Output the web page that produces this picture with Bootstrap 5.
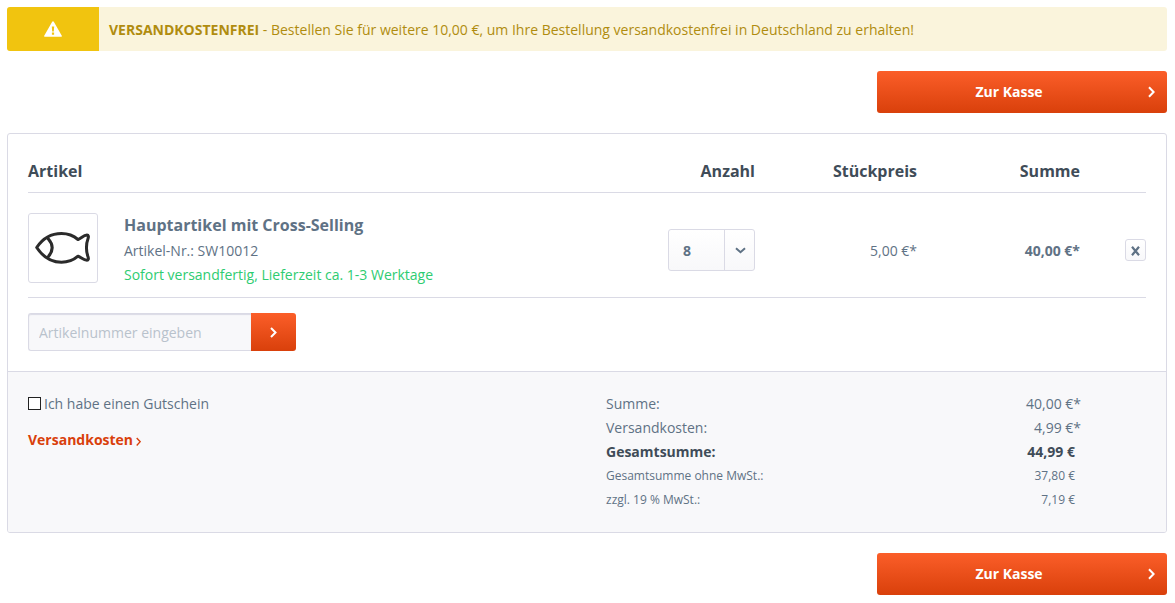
<!DOCTYPE html>
<html lang="de">
<head>
<meta charset="utf-8">
<meta name="viewport" content="width=device-width, initial-scale=1">
<title>Warenkorb</title>
<link href="https://cdn.jsdelivr.net/npm/bootstrap@5.3.0/dist/css/bootstrap.min.css" rel="stylesheet">
<script src="https://cdn.jsdelivr.net/npm/bootstrap@5.3.0/dist/js/bootstrap.bundle.min.js" defer></script>
<style>
  :root { --line: #dadae5; --ink: #5f7285; --head: #3f4c58; --soft: #f8f8fa; --fire: #d9400b; }
  body { font-family: "Open Sans", sans-serif; font-size: 14px; line-height: 24px; color: var(--ink); padding: 7px 8px 8px 7px; }
  svg { display: block; }
  .notice { background: #faf4dc; color: #b08c0f; border-radius: 3px; overflow: hidden; min-height: 44px; }
  .notice-icon { background: #f1c40f; color: #fff; width: 92px; }
  .notice-text { padding: 11px 10px 9px; }
  .btn-fire { background: linear-gradient(#fb5e29, #d9400b); color: #fff; border: 0; border-radius: 3px; font-size: 14px; font-weight: 700; line-height: 24px; }
  .btn-fire:hover { background: #fb5e29; color: #fff; }
  .btn-checkout { width: 290px; height: 42px; padding: 0 36px 0 10px; }
  .btn-checkout svg { right: 12px; top: 15px; }
  .checkout-top { margin-top: 20px; }
  .basket { border: 1px solid var(--line); border-radius: 3px; margin: 20px 0; overflow: hidden; }
  .basket-body { padding: 20px; }
  .basket-items { table-layout: fixed; }
  .basket-items th { color: var(--head); font-size: 16px; padding: 5px 0 9px; border-bottom: 1px solid var(--line); }
  .basket-items td { padding: 20px 0 10px; border-bottom: 1px solid var(--line); vertical-align: middle; }
  .basket-items .amount { padding-top: 22px; }
  .col-qty, .col-price { width: 162px; }
  .col-sum { width: 163px; }
  .col-del { width: 66px; }
  .thumb { width: 70px; height: 70px; border: 1px solid var(--line); border-radius: 3px; margin-right: 26px; }
  .item-name { color: var(--ink); font-size: 16px; font-weight: 700; margin-bottom: 2px; }
  .stock { color: #2ecc71; }
  .qty { width: 87px; height: 42px; }
  .qty select { appearance: none; border: 1px solid var(--line); border-radius: 3px; background: linear-gradient(#fff, var(--soft)); color: var(--ink); font-weight: 700; padding: 2px 40px 0 14px; }
  .qty-arrow { width: 31px; border-left: 1px solid var(--line); pointer-events: none; }
  .btn-remove { width: 21px; height: 22px; padding: 2px 0 0; border: 1px solid var(--line); border-radius: 3px; background: linear-gradient(#fff, var(--soft)); color: var(--ink); }
  .add-item { width: 268px; margin-top: 15px; }
  .add-item input { height: 38px; min-width: 0; border: 1px solid var(--line); border-right: 0; border-radius: 3px 0 0 3px; background: var(--soft); box-shadow: inset 0 1px 1px var(--line); padding: 0 10px; color: var(--ink); }
  .add-item input::placeholder { color: #b9c2cc; opacity: 1; }
  .add-item button { width: 45px; border-radius: 0 3px 3px 0; padding: 0; }
  .basket-foot { background: var(--soft); border-top: 1px solid var(--line); padding: 20px; }
  .tick { appearance: none; width: 13px; height: 13px; border: 1px solid #222; background: #fff; margin: 0 3px 2px 0; }
  .tick:checked { background: #222; box-shadow: inset 0 0 0 2px #fff; }
  .ship-link { color: var(--fire); font-weight: 700; margin-top: 12px; gap: 3px; }
  .ship-link svg { margin-top: 2px; }
  .totals { padding-left: 19px; padding-right: 65px; }
  .totals th { font-weight: 400; padding: 0; }
  .totals td { padding: 0; text-align: right; }
  .totals .plain td { padding-right: 6px; }
  .totals .grand > * { color: var(--head); font-weight: 700; }
  .totals .fine > * { font-size: 12px; }
</style>
</head>
<body>
  <div class="notice d-flex" role="alert">
    <div class="notice-icon d-flex align-items-center justify-content-center flex-shrink-0">
      <svg width="18" height="16" viewBox="0 0 18 16" aria-hidden="true"><path fill="#fff" fill-rule="evenodd" d="M9 .3a.9.9 0 0 1 .8.5l8 13.900a.6.6 0 0 1-.5 1H.7a.6.6 0 0 1-.5-1l8-13.900A.9.9 0 0 1 9 .3zM7.800 5.500l.4 5h1.600l.4-5zM7.900 11.600v2.200h2.200v-2.200z"/></svg>
    </div>
    <div class="notice-text"><strong>VERSANDKOSTENFREI</strong> - Bestellen Sie für weitere 10,00 €, um Ihre Bestellung versandkostenfrei in Deutschland zu erhalten!</div>
  </div>

  <div class="checkout-top d-flex justify-content-end">
    <button type="button" class="btn btn-fire btn-checkout position-relative">Zur Kasse
      <svg class="position-absolute" width="7" height="12" viewBox="0 0 7 12" fill="none" stroke="#fff" stroke-width="2" aria-hidden="true"><path d="M1 1.200 5.600 6 1 10.800"/></svg>
    </button>
  </div>

  <main class="basket">
    <div class="basket-body">
      <table class="basket-items w-100">
        <colgroup><col><col class="col-qty"><col class="col-price"><col class="col-sum"><col class="col-del"></colgroup>
        <thead>
          <tr><th scope="col">Artikel</th><th scope="col" class="text-end">Anzahl</th><th scope="col" class="text-end">Stückpreis</th><th scope="col" class="text-end">Summe</th><th></th></tr>
        </thead>
        <tbody>
          <tr>
            <td>
              <div class="d-flex align-items-start">
                <div class="thumb d-flex align-items-center justify-content-center flex-shrink-0">
                  <svg width="56" height="34" viewBox="0 0 56 34" fill="none" stroke="#2b2b2b" stroke-width="3" stroke-linejoin="round" stroke-linecap="round" role="img" aria-label="Fisch"><path d="M1.700 16.500C6 10 14 2.500 26.500 2.500c7 0 12.500 2.500 16.500 6C46.500 7 48.500 4.200 52 4.100c1.600 0 1.600 1.500 1.200 3-2.400 6.500-2.400 12.500 0 19.200.4 1.600.2 3-1.200 3-3.500-.1-5.500-2.600-9-4.100-4 3.500-9.500 6.100-16.500 6.100C14 31.300 6 23 1.700 16.500z"/><path d="M13 7.500c5.400 6 5.400 12.500 0 18.500"/></svg>
                </div>
                <div>
                  <div class="item-name"><a href="#" class="text-reset text-decoration-none">Hauptartikel mit Cross-Selling</a></div>
                  <div>Artikel-Nr.: SW10012</div>
                  <div class="stock">Sofort versandfertig, Lieferzeit ca. 1-3 Werktage</div>
                </div>
              </div>
            </td>
            <td>
              <div class="qty position-relative ms-auto">
                <select class="w-100 h-100" aria-label="Anzahl"><option>1</option><option>2</option><option>3</option><option>4</option><option>5</option><option>6</option><option>7</option><option selected>8</option><option>9</option><option>10</option></select>
                <span class="qty-arrow position-absolute top-0 end-0 h-100 d-flex align-items-center justify-content-center">
                  <svg width="11" height="7" viewBox="0 0 11 7" fill="none" stroke="#5f7285" stroke-width="2" aria-hidden="true"><path d="M1 1.200 5.500 5.200 10 1.200"/></svg>
                </span>
              </div>
            </td>
            <td class="amount text-end">5,00 €*</td>
            <td class="amount text-end fw-bold">40,00 €*</td>
            <td>
              <button type="button" class="btn-remove d-flex align-items-center justify-content-center ms-auto" aria-label="Entfernen">
                <svg width="9" height="10" viewBox="0 0 9 10" fill="none" stroke="#5f7285" stroke-width="2.200" aria-hidden="true"><path d="M1 .8 8 9.200M8 .8 1 9.200"/></svg>
              </button>
            </td>
          </tr>
        </tbody>
      </table>
      <form class="add-item d-flex">
        <input type="text" class="flex-grow-1" placeholder="Artikelnummer eingeben" aria-label="Artikelnummer">
        <button type="submit" class="btn btn-fire d-flex align-items-center justify-content-center flex-shrink-0" aria-label="Hinzufügen">
          <svg width="7" height="11" viewBox="0 0 7 11" fill="none" stroke="#fff" stroke-width="2" aria-hidden="true"><path d="M1 1 5.500 5.500 1 10"/></svg>
        </button>
      </form>
    </div>
    <div class="basket-foot">
      <div class="row g-0">
        <div class="col-6">
          <div class="d-flex align-items-center"><input class="tick" type="checkbox" id="voucher"><label for="voucher">Ich habe einen Gutschein</label></div>
          <a href="#" class="ship-link d-inline-flex align-items-center text-decoration-none">Versandkosten
            <svg width="5" height="9" viewBox="0 0 5 9" fill="none" stroke="#d9400b" stroke-width="1.400" aria-hidden="true"><path d="M.7 1 4.200 4.700.7 8.400"/></svg>
          </a>
        </div>
        <div class="col-6 totals">
          <table class="w-100">
            <tbody>
              <tr><th scope="row">Summe:</th><td>40,00 €*</td></tr>
              <tr><th scope="row">Versandkosten:</th><td>4,99 €*</td></tr>
              <tr class="plain grand"><th scope="row">Gesamtsumme:</th><td>44,99 €</td></tr>
              <tr class="plain fine"><th scope="row">Gesamtsumme ohne MwSt.:</th><td>37,80 €</td></tr>
              <tr class="plain fine"><th scope="row">zzgl. 19 % MwSt.:</th><td>7,19 €</td></tr>
            </tbody>
          </table>
        </div>
      </div>
    </div>
  </main>

  <div class="d-flex justify-content-end">
    <button type="button" class="btn btn-fire btn-checkout position-relative">Zur Kasse
      <svg class="position-absolute" width="7" height="12" viewBox="0 0 7 12" fill="none" stroke="#fff" stroke-width="2" aria-hidden="true"><path d="M1 1.200 5.600 6 1 10.800"/></svg>
    </button>
  </div>
</body>
</html>
